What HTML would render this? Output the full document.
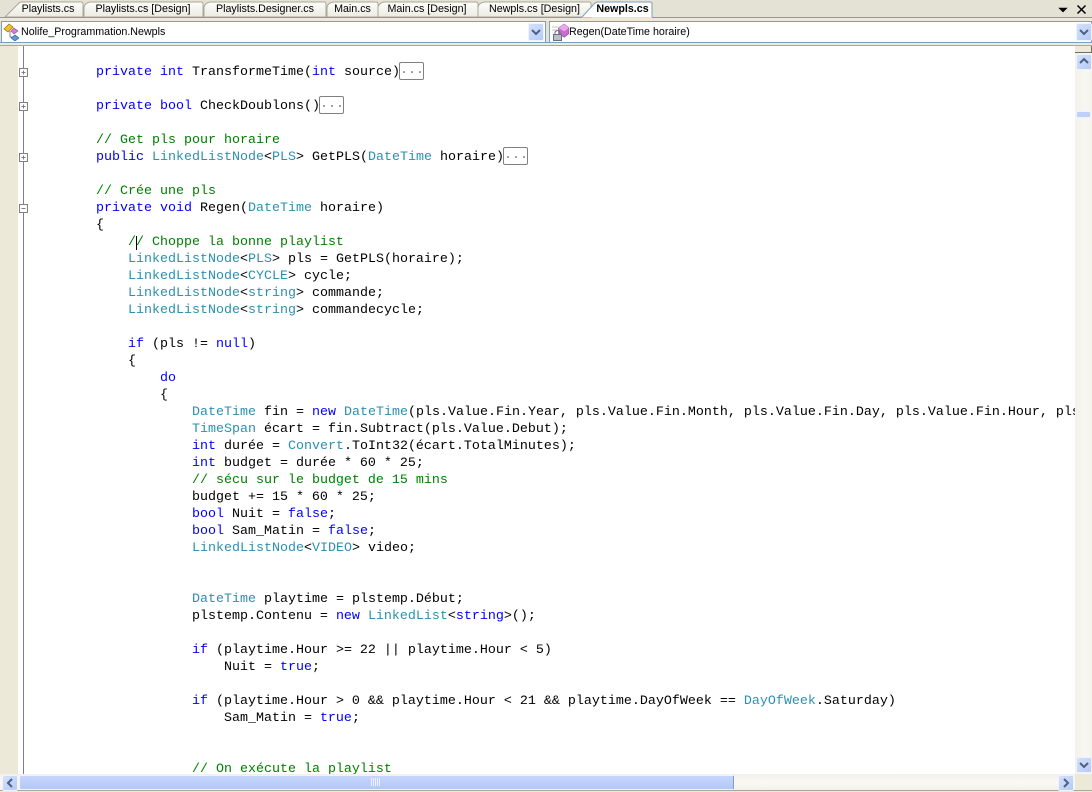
<!DOCTYPE html>
<html><head><meta charset="utf-8"><title>Newpls.cs</title>
<style>
html,body{margin:0;padding:0;width:1092px;height:792px;overflow:hidden;background:#ECE9D8}
*{box-sizing:border-box}
.abs,.tab,.combo,.btn{position:absolute}
#strip{left:0;top:0;width:1092px;height:46px;background:#E4E2D5}
.tab{top:2px;height:16px;font:10.7px/15px "Liberation Sans",sans-serif;color:#000;text-align:center;white-space:nowrap}
.combo{top:21px;height:22px;background:#fff;border:1px solid #7F9DB9;font:10.7px/21px "Liberation Sans",sans-serif;color:#000;white-space:nowrap;overflow:hidden}
#ed{left:24px;top:46px;width:1051px;height:728px;background:#fff;overflow:hidden}
#code{position:absolute;left:8px;top:1px;margin:0;font:13.333px/17px "Liberation Mono",monospace;color:#000;white-space:pre}
.k{color:#00f}.t{color:#2B91AF}.c{color:#008000}
.ol{display:inline-block;width:25px;height:18px;border:1px solid #808080;border-radius:2px;vertical-align:top;line-height:16px;color:#808080;margin-top:-2px;margin-left:-1px;font-size:13.333px;text-align:center}
.btn{width:16px;height:16px;background:linear-gradient(135deg,#D5E1FB,#B4CBF8);border:1px solid #EEF3FE;border-radius:2px}
</style></head><body>
<div class="abs" id="strip"></div>

<svg class="abs" style="left:0;top:0" width="660" height="18">
<defs><linearGradient id="tg" x1="0" y1="0" x2="0" y2="1"><stop offset="0" stop-color="#FDFDFB"/><stop offset="1" stop-color="#ECEBE2"/></linearGradient></defs>
<path d="M5 17L19 3Q20 2 22 2H81Q83 2 83 4V17Z" fill="url(#tg)" stroke="#ACA899"/>
<path d="M84 17V7Q85 3 90 2H201Q203 2 203 4V17Z" fill="url(#tg)" stroke="#ACA899"/>
<path d="M204 17V7Q205 3 210 2H324Q326 2 326 4V17Z" fill="url(#tg)" stroke="#ACA899"/>
<path d="M327 17V7Q328 3 333 2H376Q378 2 378 4V17Z" fill="url(#tg)" stroke="#ACA899"/>
<path d="M378 17V7Q379 3 384 2H476Q478 2 478 4V17Z" fill="url(#tg)" stroke="#ACA899"/>
<path d="M478 17V7Q479 3 484 2H589Q591 2 591 4V17Z" fill="url(#tg)" stroke="#ACA899"/>
<path d="M582 17L594 4Q596 2 598 2H650Q652 2 652 4V17" fill="#fff" stroke="#7F9DB9"/>
</svg>
<div class="abs" style="left:0;top:17px;width:582px;height:1px;background:#7F9DB9"></div>
<div class="abs" style="left:652px;top:17px;width:440px;height:1px;background:#7F9DB9"></div>
<div class="abs" style="left:0;top:18px;width:1092px;height:3px;background:#ECE9D8"></div>

<div class="tab" style="left:18px;width:60px">Playlists.cs</div>
<div class="tab" style="left:88px;width:110px">Playlists.cs [Design]</div>
<div class="tab" style="left:208px;width:114px">Playlists.Designer.cs</div>
<div class="tab" style="left:331px;width:43px">Main.cs</div>
<div class="tab" style="left:383px;width:88px">Main.cs [Design]</div>
<div class="tab" style="left:484px;width:101px">Newpls.cs [Design]</div>
<div class="tab" style="left:594px;width:57px;font-weight:bold">Newpls.cs</div>

<svg class="abs" style="left:1055px;top:2px" width="37" height="16">
<path d="M4 6H12L8 10Z" fill="#000" stroke="#000" stroke-width=".6"/>
<path d="M22.500 3.500L30.500 11.500M30.500 3.500L22.500 11.500" stroke="#000" stroke-width="1.500" fill="none"/>
</svg>

<div class="combo" style="left:1px;width:545px;padding-left:19px">Nolife_Programmation.Newpls</div>
<div class="combo" style="left:549px;width:543px;padding-left:19px">Regen(DateTime horaire)</div>

<svg class="abs" style="left:3px;top:23px" width="18" height="18">
<path d="M1 6L6 1L10 4L5 9Z" fill="#F2C230" stroke="#A07810" stroke-width=".8"/>
<path d="M11 5L15 8L11 11L8 8Z" fill="#D77FD0" stroke="#8A4A90" stroke-width=".6"/>
<path d="M12 12L16 15L12 18L8 15Z" fill="#5A9BE0" stroke="#2A5A9A" stroke-width=".6"/>
<path d="M7 8V14H9" stroke="#667" fill="none" stroke-width=".8"/>
</svg>
<svg class="abs" style="left:551px;top:23px" width="18" height="18">
<path d="M15 1L20 5V11L15 15L9 11V5Z" transform="translate(-1,0) scale(.95)" fill="#C86CCB" stroke="#8A3F92" stroke-width=".6"/>
<path d="M9 5L15 9L20 5L15 1Z" transform="translate(-1,0) scale(.95)" fill="#E8A8E8"/>
<path d="M1 4H7M1 7H6" stroke="#C8C8B0" fill="none"/>
<rect x="2.500" y="11.500" width="8" height="6" fill="#B8C0C8" stroke="#667080"/>
<path d="M4 11V9Q6.500 6 9 9V11" stroke="#667080" fill="none"/>
</svg>

<div class="abs" style="left:0;top:42px;width:1092px;height:1px;background:#7F9DB9"></div>
<div class="abs" style="left:0;top:43px;width:1092px;height:2px;background:#ECE9D8"></div>
<div class="abs" style="left:0;top:45px;width:1092px;height:1px;background:#ACA899"></div>

<div class="btn" style="left:528px;top:23px;height:18px"></div>
<div class="btn" style="left:1076px;top:23px;height:18px"></div>
<svg class="abs" style="left:528px;top:23px" width="16" height="18"><path d="M4 7L8 11L12 7" stroke="#4D6185" stroke-width="2" fill="none"/></svg>
<svg class="abs" style="left:1076px;top:23px" width="16" height="18"><path d="M4 7L8 11L12 7" stroke="#4D6185" stroke-width="2" fill="none"/></svg>

<div class="abs" style="left:0;top:46px;width:18px;height:728px;background:#ECE9D8"></div>
<div class="abs" style="left:18px;top:46px;width:6px;height:728px;background:#fff"></div>
<div class="abs" style="left:23px;top:46px;width:1px;height:728px;background:#808080"></div>

<div class="abs" id="ed"><pre id="code">

        <span class="k">private</span> <span class="k">int</span> TransformeTime(<span class="k">int</span> source)<span class="ol">...</span>

        <span class="k">private</span> <span class="k">bool</span> CheckDoublons()<span class="ol">...</span>

        <span class="c">// Get pls pour horaire</span>
        <span class="k">public</span> <span class="t">LinkedListNode</span>&lt;<span class="t">PLS</span>&gt; GetPLS(<span class="t">DateTime</span> horaire)<span class="ol">...</span>

        <span class="c">// Crée une pls</span>
        <span class="k">private</span> <span class="k">void</span> Regen(<span class="t">DateTime</span> horaire)
        {
            <span class="c">// Choppe la bonne playlist</span>
            <span class="t">LinkedListNode</span>&lt;<span class="t">PLS</span>&gt; pls = GetPLS(horaire);
            <span class="t">LinkedListNode</span>&lt;<span class="t">CYCLE</span>&gt; cycle;
            <span class="t">LinkedListNode</span>&lt;<span class="t">string</span>&gt; commande;
            <span class="t">LinkedListNode</span>&lt;<span class="t">string</span>&gt; commandecycle;

            <span class="k">if</span> (pls != <span class="k">null</span>)
            {
                <span class="k">do</span>
                {
                    <span class="t">DateTime</span> fin = <span class="k">new</span> <span class="t">DateTime</span>(pls.Value.Fin.Year, pls.Value.Fin.Month, pls.Value.Fin.Day, pls.Value.Fin.Hour, pls
                    <span class="t">TimeSpan</span> écart = fin.Subtract(pls.Value.Debut);
                    <span class="k">int</span> durée = <span class="t">Convert</span>.ToInt32(écart.TotalMinutes);
                    <span class="k">int</span> budget = durée * 60 * 25;
                    <span class="c">// sécu sur le budget de 15 mins</span>
                    budget += 15 * 60 * 25;
                    <span class="k">bool</span> Nuit = <span class="k">false</span>;
                    <span class="k">bool</span> Sam_Matin = <span class="k">false</span>;
                    <span class="t">LinkedListNode</span>&lt;<span class="t">VIDEO</span>&gt; video;


                    <span class="t">DateTime</span> playtime = plstemp.Début;
                    plstemp.Contenu = <span class="k">new</span> <span class="t">LinkedList</span>&lt;<span class="k">string</span>&gt;();

                    <span class="k">if</span> (playtime.Hour &gt;= 22 || playtime.Hour &lt; 5)
                        Nuit = <span class="k">true</span>;

                    <span class="k">if</span> (playtime.Hour &gt; 0 &amp;&amp; playtime.Hour &lt; 21 &amp;&amp; playtime.DayOfWeek == <span class="t">DayOfWeek</span>.Saturday)
                        Sam_Matin = <span class="k">true</span>;


                    <span class="c">// On exécute la playlist</span>
</pre>
<div class="abs" style="left:112px;top:190px;width:1px;height:14px;background:#000"></div>
</div>

<svg class="abs" style="left:18px;top:46px" width="12" height="180">
<g fill="#fff" stroke="#808080">
<rect x="1.500" y="22.500" width="8" height="8"/>
<rect x="1.500" y="56.500" width="8" height="8"/>
<rect x="1.500" y="107.500" width="8" height="8"/>
<rect x="1.500" y="158.500" width="8" height="8"/>
</g>
<path d="M3.500 26.500H7.500M5.500 24.500V28.500M3.500 60.500H7.500M5.500 58.500V62.500M3.500 111.500H7.500M5.500 109.500V113.500M3.500 162.500H7.500" stroke="#808080" fill="none"/>
</svg>

<!-- vertical scrollbar -->
<div class="abs" style="left:1075px;top:46px;width:17px;height:728px;background:linear-gradient(90deg,#F3F1EA,#F8F7F2 60%,#F4F3EC)"></div>
<div class="abs" style="left:1075px;top:46px;width:17px;height:7px;background:#ECE9D8;border-bottom:1px solid #716F64;border-right:1px solid #716F64"></div>
<div class="btn" style="left:1076px;top:54px"></div>
<svg class="abs" style="left:1076px;top:54px" width="16" height="16"><path d="M4 9L8 5L12 9" stroke="#4D6185" stroke-width="2" fill="none"/></svg>
<div class="abs" style="left:1076px;top:111px;width:15px;height:7px;background:#BDD0FA;border:1px solid #EEF3FE;border-radius:2px"></div>
<div class="btn" style="left:1076px;top:757px"></div>
<svg class="abs" style="left:1076px;top:757px" width="16" height="16"><path d="M4 6L8 10L12 6" stroke="#4D6185" stroke-width="2" fill="none"/></svg>

<!-- horizontal scrollbar -->
<div class="abs" style="left:0;top:774px;width:1075px;height:16px;background:linear-gradient(180deg,#F2F0E8,#F9F8F4 50%,#F3F2EB)"></div>
<div class="abs" style="left:1075px;top:774px;width:17px;height:16px;background:#ECE9D8"></div>
<div class="abs" style="left:0;top:790px;width:1092px;height:1px;background:#ACA899"></div>
<div class="abs" style="left:0;top:791px;width:1092px;height:1px;background:#ECE9D8"></div>
<div class="btn" style="left:2px;top:775px"></div>
<svg class="abs" style="left:2px;top:775px" width="16" height="16"><path d="M10 4L6 8L10 12" stroke="#4D6185" stroke-width="2" fill="none"/></svg>
<div class="abs" style="left:19px;top:775px;width:715px;height:15px;background:linear-gradient(180deg,#C6D6FB,#BACEF9 60%,#B4C9F7);border:1px solid #EEF3FE;border-right-color:#7F9DDB;border-radius:2px"></div>
<svg class="abs" style="left:371px;top:778px" width="10" height="9"><path d="M.5 0V8M2.500 0V8M4.500 0V8M6.500 0V8M8.500 0V8" stroke="#EEF3FE" fill="none"/></svg>
<div class="btn" style="left:1058px;top:775px"></div>
<svg class="abs" style="left:1058px;top:775px" width="16" height="16"><path d="M6 4L10 8L6 12" stroke="#4D6185" stroke-width="2" fill="none"/></svg>
</body></html>
